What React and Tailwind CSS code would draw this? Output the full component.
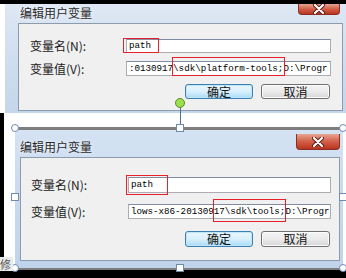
import React from 'react';

const cjk = "font-['Noto_Sans_CJK_SC',sans-serif]";
const mono = "font-['Liberation_Mono',monospace]";

const CloseButton = ({ className }) => (
  <div
    className={`flex items-center justify-center rounded-b-[4px] border border-t-0 border-[#8a2f22] bg-gradient-to-b from-[#e6a493] via-[#d35f48] to-[#b8341f] ${className}`}
  >
    <svg width="14" height="10" viewBox="0 0 14 10">
      <path d="M3 1 L11 9 M11 1 L3 9" stroke="#5a1a10" strokeWidth="4" strokeLinecap="round" />
      <path d="M3 1 L11 9 M11 1 L3 9" stroke="#ffffff" strokeWidth="2.2" strokeLinecap="round" />
    </svg>
  </div>
);

const Field = ({ value, className }) => (
  <div
    className={`flex items-center overflow-hidden whitespace-nowrap border border-[#abadb3] border-t-[#7f8ea3] bg-white pl-[2px] text-[9.2px] leading-none text-black ${mono} ${className}`}
  >
    {value}
  </div>
);

const Buttons = ({ h, okLeft }) => (
  <div className={`flex gap-[8px] ${cjk} text-[12px] leading-none`} style={{ marginLeft: okLeft }}>
    <div
      className={`flex ${h} w-[68px] items-center justify-center rounded-[3px] border border-[#3c7fb1] bg-gradient-to-b from-[#eaf6fd] via-[#d9f0fc] to-[#a7d9f5] text-[#111] shadow-[inset_0_0_0_1px_#bfe6fb]`}
    >
      确定
    </div>
    <div
      className={`flex ${h} w-[69px] items-center justify-center rounded-[3px] border border-[#707070] bg-gradient-to-b from-[#f4f4f4] via-[#ebebeb] to-[#d6d6d6] text-[#111] shadow-[inset_0_0_0_1px_#fcfcfc]`}
    >
      取消
    </div>
  </div>
);

const Handle = ({ x, y, round }) => (
  <div
    className={`absolute h-[8px] w-[8px] border border-[#6d8bb0] bg-white ${round ? 'rounded-full' : ''}`}
    style={{ left: x - 4, top: y - 4 }}
  />
);

export default function App() {
  return (
    <div className={`relative h-[278px] w-[346px] overflow-hidden bg-black ${cjk}`}>
      <div className="h-[4px]" />

      {/* top dialog */}
      <div className="flex h-[109px] bg-white">
        <div className="ml-[5px] flex-1 bg-gradient-to-b from-[#dfe8f4] via-[#cfdeef] to-[#c4d6ea]">
          <div className="flex h-[19px]">
            <div className="pl-[15px] pt-[3px] text-[12px] leading-none text-[#2a2a2a] [text-shadow:0_0_4px_#ffffff]">
              编辑用户变量
            </div>
            <CloseButton className="ml-auto mr-[6px] h-[11px] w-[42px]" />
          </div>
          <div className="ml-[13px] h-[88px] w-[325px] border border-[#8d9bae] bg-[#f0f0f0]">
            <div className="flex items-center pt-[15px]">
              <div className="w-[107px] pl-[11px] text-[12px] leading-none text-[#1a1a1a]">变量名(N):</div>
              <Field value="path" className="h-[14px] w-[205px]" />
            </div>
            <div className="mt-[8px] flex items-center">
              <div className="w-[107px] pl-[11px] text-[12px] leading-none text-[#1a1a1a]">变量值(V):</div>
              <Field value=":0130917\sdk\platform-tools;D:\Progr" className="h-[15px] w-[205px]" />
            </div>
            <div className="mt-[8px]">
              <Buttons h="h-[15px]" okLeft={166} />
            </div>
          </div>
        </div>
      </div>

      {/* gap between pictures */}
      <div className="ml-[4px] h-[14px] bg-white" />

      {/* bottom dialog */}
      <div className="flex h-[143px]">
        <div className="w-[4px]" />
        <div className="w-[11px] bg-white" />
        <div className="w-[328px] border-t-[3px] border-b-[2px] border-[#7d7d7d] bg-gradient-to-b from-[#d4e2f3] via-[#c9daee] to-[#bfd3ea]">
          <div className="flex h-[27px]">
            <div className="pl-[5px] pt-[11px] text-[12px] leading-none text-[#2a2a2a] [text-shadow:0_0_4px_#ffffff]">
              编辑用户变量
            </div>
            <CloseButton className="ml-auto mr-[3px] mt-[4px] h-[16px] w-[44px]" />
          </div>
          <div className="ml-[5px] h-[104px] w-[320px] border border-[#8d9bae] bg-[#f0f0f0]">
            <div className="flex items-center pt-[19px]">
              <div className="w-[107px] pl-[10px] text-[12px] leading-none text-[#1a1a1a]">变量名(N):</div>
              <Field value="path" className="h-[16px] w-[203px]" />
            </div>
            <div className="mt-[11px] flex items-center">
              <div className="w-[107px] pl-[10px] text-[12px] leading-none text-[#1a1a1a]">变量值(V):</div>
              <Field value="lows-x86-20130917\sdk\tools;D:\Progr" className="h-[15px] w-[203px]" />
            </div>
            <div className="mt-[12px]">
              <Buttons h="h-[16px]" okLeft={164} />
            </div>
          </div>
        </div>
        <div className="w-[3px] bg-white" />
      </div>

      {/* red annotation boxes */}
      <div className="absolute left-[123px] top-[38px] h-[15px] w-[36px] border border-[#e8202a]" />
      <div className="absolute left-[172px] top-[57px] h-[19px] w-[113px] border border-[#e8202a]" />
      <div className="absolute left-[126px] top-[175px] h-[20px] w-[42px] border-[1.5px] border-[#e8202a]" />
      <div className="absolute left-[213px] top-[199px] h-[23px] w-[73px] border border-[#e8202a]" />

      {/* selection handles */}
      <div className="absolute left-[180px] top-[108px] h-[18px] w-[1px] bg-[#4f6f95]" />
      <div className="absolute left-[175px] top-[98px] h-[10px] w-[10px] rounded-full border border-[#5c8a2a] bg-[#9be04a]" />
      <Handle x={15} y={128} round />
      <Handle x={343} y={128} round />
      <Handle x={180} y={128} />
      <Handle x={15} y={197} />
      <Handle x={343} y={197} />
      <Handle x={15} y={268} round />
      <Handle x={180} y={268} />
      <Handle x={343} y={268} round />

      {/* fragment of document text */}
      <div className="absolute left-0 top-[257px] h-[14px] w-[13px] bg-[#e8ecef] text-[11px] leading-[14px] text-[#555]">
        修
      </div>
    </div>
  );
}
